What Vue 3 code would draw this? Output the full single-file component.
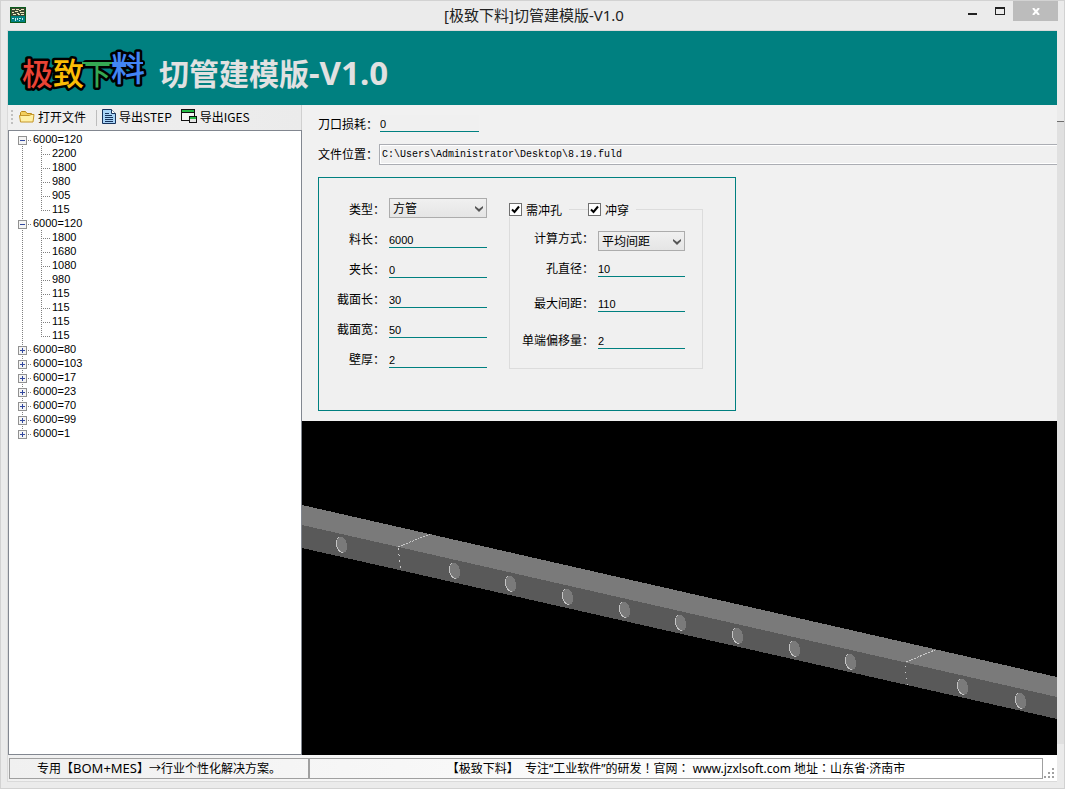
<template>
<div class="window">
  <header class="titlebar">
    <svg class="app-icon" viewBox="0 0 16 16" shape-rendering="crispEdges">
      <rect width="16" height="16" fill="#0a5c1c"/>
      <rect x="1" y="1" width="14" height="8" fill="#3c4a34"/>
      <path d="M2 2.500h3M6 2.500h3M11 2.500h3M2 5.500h2M5 4.500h3M10 5.500h4M3 7.500h3M8 7.500h2M11 7.500h3M9 3.500h2M7 6.500h2" stroke="#ece8bc"/>
      <rect x="1" y="9" width="14" height="6" fill="#008080"/>
      <path d="M2 11.500h2M5.500 11v3M7.500 11v2M9 11.500h2M9 13.500h1M12.500 11v2" stroke="#c8e8e8"/>
    </svg>
    <h1 class="caption">[极致下料]切管建模版-V1.0</h1>
    <div class="window-buttons">
      <button type="button" aria-label="最小化">
        <svg width="9" height="8"><rect y="6" width="9" height="2" fill="#222"/></svg>
      </button>
      <button type="button" aria-label="最大化">
        <svg width="10" height="8" shape-rendering="crispEdges">
          <path d="M0 0h10v8H0zM1 2v5h8V2z" fill="#222" fill-rule="evenodd"/>
        </svg>
      </button>
      <button type="button" class="close" aria-label="关闭">
        <svg width="8" height="7"><path d="M1 0l6 7M7 0L1 7" stroke="#fff" stroke-width="2"/></svg>
      </button>
    </div>
  </header>

  <div class="frame">
    <div class="client">
      <div class="banner">
        <svg class="logo" viewBox="0 0 124 66" width="124" height="66">
          <path class="bar-edge" d="M64 28h56"/>
          <text x="0" y="50" font-size="31" fill="#ea4335">极</text>
          <text x="31" y="50" font-size="31" fill="#fbbc05">致</text>
          <text x="62" y="50" font-size="27" fill="#34a853">下</text>
          <text x="89" y="46" font-size="34" fill="#4285f4">料</text>
          <path d="M60 28h30" stroke="#34a853" stroke-width="2"/>
          <path d="M90 28h31" stroke="#4285f4" stroke-width="2"/>
        </svg>
        <h2>切管建模版<span>-V1.0</span></h2>
      </div>

      <div class="workspace">
        <aside class="sidebar">
          <div class="toolbar">
            <i class="grip"></i>
            <button type="button" class="open">
              <svg width="16" height="13" viewBox="0 0 16 13">
                <path d="M1.500 11V2.500l1-1h4l1.500 2h4.500l1 1V11z" fill="#f3cf5e" stroke="#b98a1c"/>
                <path d="M1.500 12L.5 5.500h10l1.500-1h3L14 12z" fill="#fff0a4" stroke="#c4962a"/>
              </svg>
              打开文件
            </button>
            <i class="separator"></i>
            <button type="button" class="step">
              <svg width="14" height="15" viewBox="0 0 14 15">
                <path d="M.5.5h9l4 4v10H.5z" fill="#a9d4f7" stroke="#16325c"/>
                <path d="M9.500.5v4h4" fill="#fff" stroke="#16325c"/>
                <path d="M3 4.500h4M3 6.500h7M3 8.500h8M3 10.500h8M3 12.500h8" stroke="#16325c"/>
              </svg>
              导出STEP
            </button>
            <button type="button" class="iges">
              <svg width="16" height="15" viewBox="0 0 16 15" shape-rendering="crispEdges">
                <path d="M0 0h14v12H0z" fill="#111"/>
                <path d="M1 1h12v2H1z" fill="#25b845"/>
                <path d="M1 4h12v7H1z" fill="#f4f4f4"/>
                <path d="M8 7h8v7H8z" fill="#111"/>
                <path d="M9 8h6v2H9z" fill="#25b845"/>
                <path d="M9 10h6v3H9z" fill="#e4e4e4"/>
              </svg>
              导出IGES
            </button>
          </div>

          <ul class="tree">
            <li v-for="(node, i) in nodes" :key="i" class="node">
              <div class="node-row">
                <button
                    type="button"
                    class="toggle"
                    :class="{plus: !node.open}"
                    :aria-label="node.open ? '折叠' : '展开'"
                    @click="node.open = !node.open"></button>
                <i class="stub"></i>
                <span>{{node.label}}</span>
              </div>
              <ul v-if="node.open && node.items.length" class="leaves">
                <li v-for="(item, j) in node.items" :key="j" class="leaf">{{item}}</li>
              </ul>
            </li>
          </ul>
        </aside>

        <main class="main">
          <section class="settings">
            <div class="top-row loss">
              <label for="loss">刀口损耗：</label>
              <input id="loss" v-model="loss" type="text" class="line">
            </div>
            <div class="top-row path">
              <label for="path">文件位置：</label>
              <input id="path" v-model="path" type="text" class="box">
            </div>

            <div class="panel">
              <div class="pipe">
                <label for="kind">类型：</label>
                <div class="combo">
                  <select id="kind" v-model="kind">
                    <option>方管</option>
                    <option>圆管</option>
                  </select>
                  <svg width="8" height="6"><path d="M0 0l4 3 4-3v2L4 6 0 2z" fill="#555"/></svg>
                </div>
                <template v-for="f in pipeFields" :key="f.id">
                  <label :for="f.id">{{f.label}}：</label>
                  <input :id="f.id" v-model="f.value" type="text" class="line">
                </template>
              </div>

              <div class="punch">
                <div class="checks">
                  <label><input v-model="needPunch" type="checkbox">需冲孔</label>
                  <label><input v-model="through" type="checkbox">冲穿</label>
                </div>
                <div class="punch-fields">
                  <label for="method">计算方式：</label>
                  <div class="combo">
                    <select id="method" v-model="method">
                      <option>平均间距</option>
                      <option>固定间距</option>
                    </select>
                    <svg width="8" height="6"><path d="M0 0l4 3 4-3v2L4 6 0 2z" fill="#555"/></svg>
                  </div>
                  <template v-for="f in punchFields" :key="f.id">
                    <label :for="f.id">{{f.label}}：</label>
                    <input :id="f.id" v-model="f.value" type="text" class="line">
                  </template>
                </div>
              </div>
            </div>
          </section>

          <div class="viewer">
            <svg viewBox="0 0 755 334" preserveAspectRatio="xMidYMid slice" shape-rendering="crispEdges">
              <path d="M0 84L755 256V277L0 105z" fill="#7a7a7a"/>
              <path d="M0 104L755 276V298L0 127z" fill="#595959"/>
              <g stroke="#c8c8c8" fill="none">
                <path d="M96 126L128 113" stroke-dasharray="2 1"/>
                <path d="M96 127L99 149" stroke-dasharray="2 4"/>
                <path d="M604 241L633 229" stroke-dasharray="2 1"/>
                <path d="M603 245L606 265" stroke-dasharray="1 5"/>
              </g>
              <g v-for="(h, i) in holes" :key="i" :transform="`translate(${h[0]} ${h[1]}) rotate(-16)`">
                <ellipse rx="5" ry="8" fill="#c4c4c4"/>
                <ellipse cx="1" rx="5" ry="8" fill="#7a7a7a"/>
              </g>
            </svg>
          </div>
        </main>
      </div>

      <footer class="statusbar">
        <div class="cell slogan">专用【<span>BOM+MES</span>】→行业个性化解决方案。</div>
        <div class="cell about">【极致下料】&nbsp; 专注“工业软件”的研发！官网：&nbsp;www.jzxlsoft.com 地址：山东省·济南市</div>
        <svg class="size-grip" width="11" height="11" shape-rendering="crispEdges">
          <path d="M8 0h2v2H8zM4 4h2v2H4zM8 4h2v2H8zM0 8h2v2H0zM4 8h2v2H4zM8 8h2v2H8z" fill="#a0a0a0"/>
        </svg>
      </footer>
    </div>
    <div class="edge"></div>
  </div>
</div>
</template>

<script setup>
import {ref} from "vue";

const nodes = ref([
  {label: "6000=120", open: true, items: [2200, 1800, 980, 905, 115]},
  {label: "6000=120", open: true, items: [1800, 1680, 1080, 980, 115, 115, 115, 115]},
  {label: "6000=80", open: false, items: []},
  {label: "6000=103", open: false, items: []},
  {label: "6000=17", open: false, items: []},
  {label: "6000=23", open: false, items: []},
  {label: "6000=70", open: false, items: []},
  {label: "6000=99", open: false, items: []},
  {label: "6000=1", open: false, items: []},
]);

const loss = ref("0");
const path = ref("C:\\Users\\Administrator\\Desktop\\8.19.fuld");
const kind = ref("方管");
const method = ref("平均间距");
const needPunch = ref(true);
const through = ref(true);

const pipeFields = ref([
  {id: "length", label: "料长", value: "6000"},
  {id: "clamp", label: "夹长", value: "0"},
  {id: "section-length", label: "截面长", value: "30"},
  {id: "section-width", label: "截面宽", value: "50"},
  {id: "wall", label: "壁厚", value: "2"},
]);

const punchFields = ref([
  {id: "diameter", label: "孔直径", value: "10"},
  {id: "max-gap", label: "最大间距", value: "110"},
  {id: "offset", label: "单端偏移量", value: "2"},
]);

// hole centres on the front face of the tube
const holes = [
  [39, 124], [152, 150], [208, 163], [265, 176], [322, 189], [378, 202],
  [435, 215], [492, 228], [548, 241], [660, 266], [718, 280],
];
</script>

<style>
body {
  margin: 0;
}
</style>

<style scoped>
* {
  box-sizing: border-box;
}

.window {
  display: flex;
  flex-direction: column;
  min-height: 100vh;
  padding-bottom: 6px;
  background: #ebebeb;
  border: 1px solid #d2d2d2;
  font-family: "Liberation Sans", "Noto Sans CJK SC", sans-serif;
  font-size: 12px;
  color: #000;
}

button, input, select {
  font: inherit;
  color: inherit;
  margin: 0;
  padding: 0;
  border: 0;
  border-radius: 0;
  background: none;
  outline: none;
}

ul {
  list-style: none;
  margin: 0;
  padding: 0;
}

svg {
  display: block;
  flex: none;
}

/* title bar */
.titlebar {
  display: grid;
  grid-template-columns: 1fr auto 1fr;
  height: 29px;
  padding: 0 6px 0 9px;
}

.app-icon {
  width: 16px;
  height: 16px;
  margin-top: 6px;
}

.caption {
  margin: 0;
  font: 15px/28px "Noto Sans", "Noto Sans CJK SC", sans-serif;
  color: #222;
}

.window-buttons {
  display: flex;
  justify-content: flex-end;
}

.window-buttons button {
  display: flex;
  align-items: center;
  justify-content: center;
  width: 27px;
  height: 20px;
}

.window-buttons .close {
  width: 45px;
  background: #bcbcbc;
}

/* frame */
.frame {
  flex: 1;
  display: flex;
  padding-left: 6px;
}

.client {
  flex: 1;
  min-width: 0;
  display: flex;
  flex-direction: column;
  border: 1px solid #dadada;
  border-right: 0;
}

.edge {
  width: 7px;
  margin: 91px 0 38px;
  border-top: 1px solid #6e6e6e;
  background: #e0e0e0;
}

.banner {
  display: flex;
  align-items: center;
  gap: 13px;
  height: 74px;
  padding-left: 14px;
  background: #008080;
}

.logo {
  overflow: visible;
}

.logo text {
  font-family: "Noto Sans CJK SC", sans-serif;
  font-weight: 500;
  stroke: #000;
  stroke-width: 5px;
  stroke-linejoin: round;
  paint-order: stroke;
}

.bar-edge {
  stroke: #000;
  stroke-width: 6px;
  stroke-linecap: round;
}

.banner h2 {
  margin: 8px 0 0;
  font: bold 30px/40px "Noto Sans CJK SC", sans-serif;
  color: #e1e1e1;
}

.banner h2 span {
  font-family: "Noto Sans", sans-serif;
  font-size: 33px;
}

.workspace {
  flex: 1;
  display: flex;
}

/* left side */
.sidebar {
  flex: none;
  display: flex;
  flex-direction: column;
  width: 294px;
}

.toolbar {
  display: flex;
  align-items: center;
  height: 25px;
  background: linear-gradient(to right, #f0f0f0, #ebebeb);
  border-right: 1px solid #d0d0d0;
  font-family: "Noto Sans CJK SC", sans-serif;
}

.toolbar button {
  display: flex;
  align-items: center;
  gap: 3px;
  height: 22px;
  padding-bottom: 2px;
  line-height: 20px;
  white-space: nowrap;
}

.grip {
  width: 2px;
  height: 16px;
  margin: 0 6px 0 3px;
  background: repeating-linear-gradient(#c0c0c0 0 2px, transparent 2px 4px);
}

.separator {
  width: 1px;
  height: 16px;
  margin: 0 5px 0 10px;
  background: #bdbdbd;
}

.iges {
  margin-left: 9px;
}

.tree {
  flex: 1;
  padding: 1px 0 0 9px;
  background: #fff;
  border: 1px solid #828790;
  font-size: 11px;
  line-height: 14px;
}

.node {
  background: repeating-linear-gradient(#808080 0 1px, transparent 1px 2px) 4px 0 / 1px 100% no-repeat;
}

.node:first-child {
  background-position: 4px 8px;
}

.node:last-child {
  background-size: 1px 8px;
}

.node-row {
  display: flex;
  height: 14px;
}

.toggle {
  width: 9px;
  height: 9px;
  margin-top: 4px;
  border: 1px solid #919191;
  background:
    linear-gradient(#31479e, #31479e) center / 5px 1px no-repeat,
    #f4f4f4;
}

.toggle.plus {
  background:
    linear-gradient(#31479e, #31479e) center / 5px 1px no-repeat,
    linear-gradient(#31479e, #31479e) center / 1px 5px no-repeat,
    #f4f4f4;
}

.stub {
  width: 3px;
  height: 1px;
  margin: 8px 2px 0 1px;
  background: repeating-linear-gradient(to right, #808080 0 1px, transparent 1px 2px);
}

.leaves {
  padding-left: 23px;
}

.leaf {
  height: 14px;
  padding-left: 11px;
  background:
    repeating-linear-gradient(#808080 0 1px, transparent 1px 2px) 0 0 / 1px 100% no-repeat,
    repeating-linear-gradient(to right, #808080 0 1px, transparent 1px 2px) 0 8px / 9px 1px no-repeat;
}

.leaf:last-child {
  background-size: 1px 8px, 9px 1px;
}

/* form */
.main {
  flex: 1;
  min-width: 0;
  display: flex;
  flex-direction: column;
}

.settings {
  padding: 10px 0 10px 16px;
  background: #f1f1f1;
}

.settings label {
  white-space: nowrap;
}

.top-row {
  display: flex;
  align-items: center;
  margin-bottom: 12px;
}

.top-row label {
  width: 61px;
}

.loss {
  height: 17px;
}

.loss label {
  width: 62px;
}

.path label {
  padding-bottom: 2px;
}

.line {
  width: 100%;
  height: 20px;
  padding-top: 4px;
  font-size: 11px;
  border-bottom: 1px solid #008080;
}

.loss .line {
  width: 99px;
  height: 17px;
  padding-top: 1px;
  background: #f0f0f0;
}

.box {
  flex: 1;
  min-width: 0;
  height: 21px;
  padding-left: 2px;
  border: 1px solid #abadb3;
  border-right: 0;
  background: #f0f0f0;
  box-shadow: inset 1px 1px #fff, inset 0 -1px #fff;
  font: 10px "Liberation Mono", monospace;
}

.panel {
  display: flex;
  align-items: flex-start;
  width: 418px;
  padding: 15px 0 37px 6px;
  background: #f0f0f0;
  border: 1px solid #008080;
}

.pipe {
  display: grid;
  grid-template-columns: 60px 98px;
  grid-auto-rows: 30px;
  column-gap: 4px;
  align-items: center;
}

.pipe label, .punch-fields label {
  text-align: right;
}

.combo {
  position: relative;
}

.combo select {
  display: block;
  appearance: none;
  width: 100%;
  height: 20px;
  padding: 1px 0 0 3px;
  border: 1px solid #acacac;
  background: linear-gradient(#f0f0f0, #e5e5e5);
}

.combo svg {
  position: absolute;
  right: 4px;
  top: 8px;
  pointer-events: none;
}

.punch {
  width: 194px;
  height: 160px;
  margin: 16px 0 0 22px;
  border: 1px solid #dcdcdc;
}

.checks {
  display: flex;
  gap: 19px;
  height: 15px;
  margin: -8px 0 0 -1px;
}

.checks label {
  display: flex;
  align-items: center;
  gap: 4px;
  padding-right: 7px;
  background: #f0f0f0;
}

.checks input {
  appearance: none;
  width: 13px;
  height: 13px;
  border: 1px solid #707070;
  background: #fff;
}

.checks input:checked {
  background: #fff url("data:image/svg+xml,%3Csvg xmlns='http://www.w3.org/2000/svg' viewBox='0 0 11 11'%3E%3Cpath d='M2 5.500l2.500 2.500L9 2.500' fill='none' stroke='%23000' stroke-width='2'/%3E%3C/svg%3E");
}

.punch-fields {
  display: grid;
  grid-template-columns: 72px 87px;
  grid-template-rows: 34px 26px 35px 37px;
  column-gap: 4px;
  align-items: end;
  padding-left: 12px;
  line-height: 16px;
}

.punch-fields label:first-child {
  padding-bottom: 4px;
}

/* 3D view */
.viewer {
  flex: 1;
  background: #000;
}

.viewer svg {
  width: 100%;
  height: 334px;
}

/* status bar */
.statusbar {
  display: flex;
  height: 26px;
  padding: 3px 0 2px 1px;
  background: linear-gradient(to right, #f0f0f0, #fff 80%);
  font-family: "Noto Sans", "Noto Sans CJK SC", sans-serif;
}

.cell {
  border: 1px solid #a0a0a0;
  line-height: 19px;
  text-align: center;
  white-space: nowrap;
  overflow: hidden;
}

.slogan {
  width: 300px;
}

.slogan span {
  font-size: 13px;
}

.about {
  flex: 1;
  font-family: "Noto Sans", "Noto Sans CJK TC", sans-serif;
}

.size-grip {
  align-self: flex-end;
  margin: 0 2px 0 1px;
}
</style>
